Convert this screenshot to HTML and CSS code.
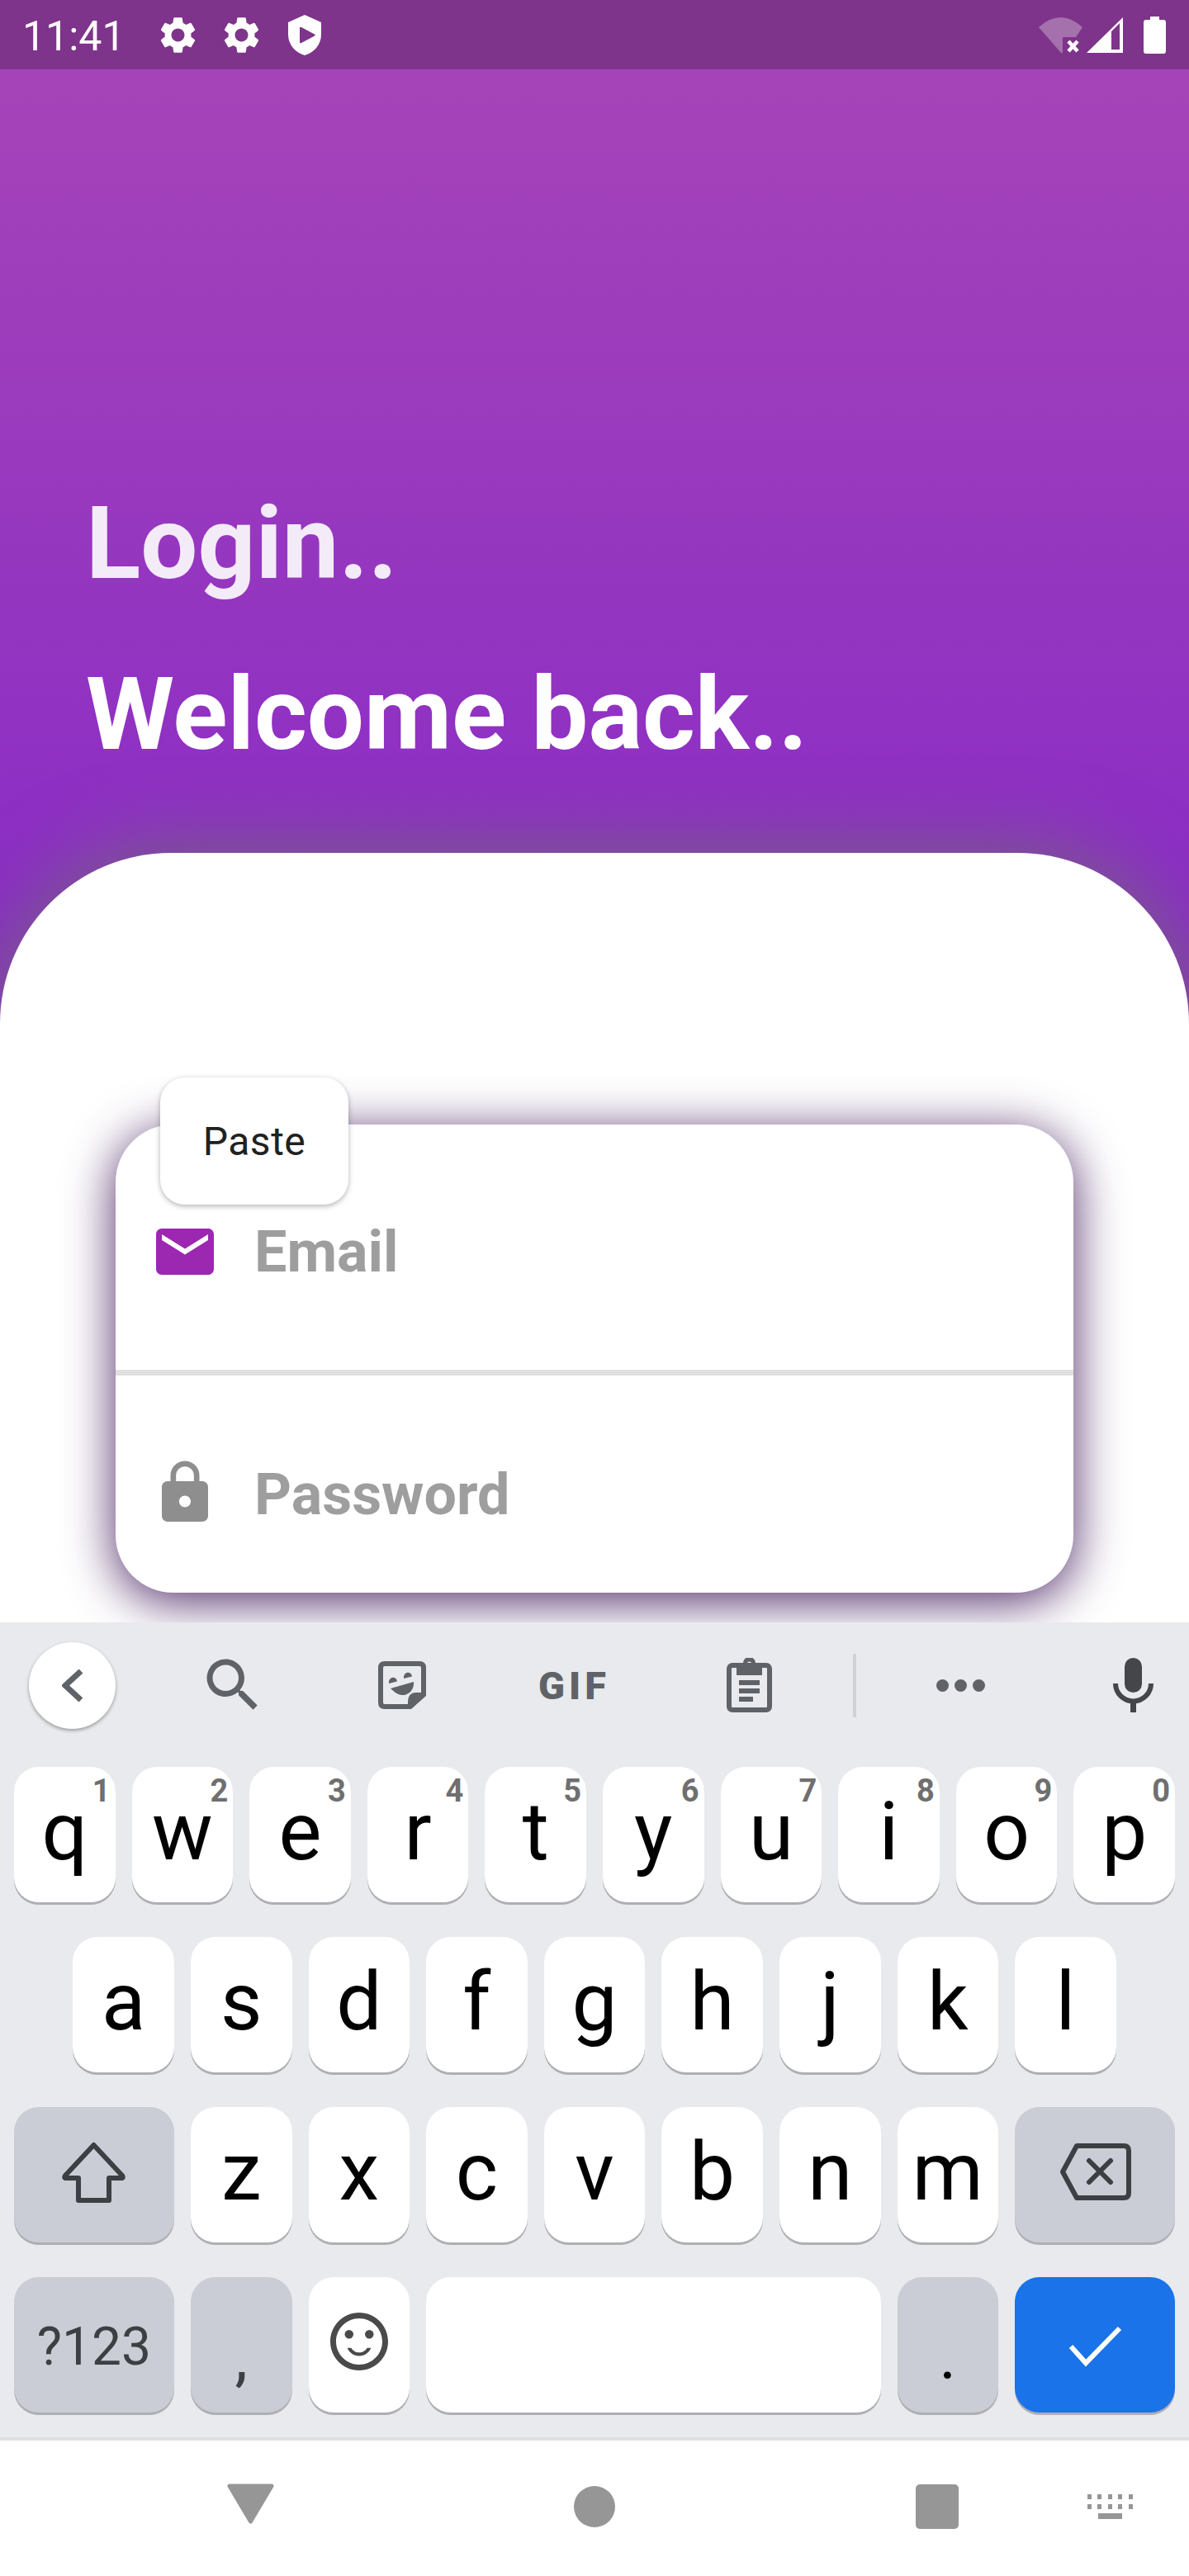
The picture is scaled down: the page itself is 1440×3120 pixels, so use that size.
FILE: index.html
```html
<html>
<head>
<title>Login</title>
<link rel="stylesheet" href="styles.css">
</head>
<body>

<div class="status">
  <span class="time">11:41</span>
  <svg class="st-gear" viewBox="0 0 24 24"><path fill="#fff" fill-rule="evenodd" d="M19.14 12.94c.04-.3.06-.61.06-.94 0-.32-.02-.64-.07-.94l2.03-1.58c.18-.14.23-.41.12-.61l-1.92-3.32c-.12-.22-.37-.29-.59-.22l-2.39.96c-.5-.38-1.03-.7-1.62-.94l-.36-2.54c-.04-.24-.24-.41-.48-.41h-3.84c-.24 0-.43.17-.47.41l-.36 2.54c-.59.24-1.13.57-1.62.94l-2.39-.96c-.22-.08-.47 0-.59.22L2.74 8.87c-.12.21-.08.47.12.61l2.03 1.58c-.05.3-.09.63-.09.94s.02.64.07.94l-2.03 1.58c-.18.14-.23.41-.12.61l1.92 3.32c.12.22.37.29.59.22l2.39-.96c.5.38 1.03.7 1.62.94l.36 2.54c.05.24.24.41.48.41h3.84c.24 0 .44-.17.47-.41l.36-2.54c.59-.24 1.13-.56 1.62-.94l2.39.96c.22.08.47 0 .59-.22l1.92-3.32c.12-.22.07-.47-.12-.61l-2.01-1.58zM12 15.6c-1.98 0-3.6-1.62-3.6-3.6s1.62-3.6 3.6-3.6 3.6 1.62 3.6 3.6-1.62 3.6-3.6 3.6z"/></svg>
  <svg class="st-gear two" viewBox="0 0 24 24"><path fill="#fff" fill-rule="evenodd" d="M19.14 12.94c.04-.3.06-.61.06-.94 0-.32-.02-.64-.07-.94l2.03-1.58c.18-.14.23-.41.12-.61l-1.92-3.32c-.12-.22-.37-.29-.59-.22l-2.39.96c-.5-.38-1.03-.7-1.62-.94l-.36-2.54c-.04-.24-.24-.41-.48-.41h-3.84c-.24 0-.43.17-.47.41l-.36 2.54c-.59.24-1.13.57-1.62.94l-2.39-.96c-.22-.08-.47 0-.59.22L2.74 8.87c-.12.21-.08.47.12.61l2.03 1.58c-.05.3-.09.63-.09.94s.02.64.07.94l-2.03 1.58c-.18.14-.23.41-.12.61l1.92 3.32c.12.22.37.29.59.22l2.39-.96c.5.38 1.03.7 1.62.94l.36 2.54c.05.24.24.41.48.41h3.84c.24 0 .44-.17.47-.41l.36-2.54c.59-.24 1.13-.56 1.62-.94l2.39.96c.22.08.47 0 .59-.22l1.92-3.32c.12-.22.07-.47-.12-.61l-2.01-1.58zM12 15.6c-1.98 0-3.6-1.62-3.6-3.6s1.62-3.6 3.6-3.6 3.6 1.62 3.6 3.6-1.62 3.6-3.6 3.6z"/></svg>
  <svg class="st-shield" viewBox="0 0 40 49"><path fill="#fff" fill-rule="evenodd" d="M20 0L40 9V24C40 36 31 46 20 49C9 46 0 36 0 24V9ZM14 16V33Q14 35 16 34L32 25.5Q33.5 24.500 32 23.500L16 15Q14 14 14 16Z"/></svg>
  <span class="st-space"></span>
  <svg class="st-wifi" viewBox="0 0 53 43"><path fill="#fff" fill-opacity="0.3" d="M0 12Q26 -12 53 12L45 24H29V43H27Z"/><path fill="none" stroke="#fff" stroke-width="4.500" d="M36 29L47 41M47 29L36 41"/></svg>
  <svg class="st-signal" viewBox="0 0 44 43"><path fill="#fff" fill-rule="evenodd" d="M0 43L44 0V43ZM30 17V39H40V7Z"/></svg>
  <svg class="st-batt" viewBox="0 0 27 45"><path fill="#fff" d="M8 0H19V4H24Q27 4 27 7V42Q27 45 24 45H3Q0 45 0 42V7Q0 4 3 4H8Z"/></svg>
</div>

<div class="screen">
  <div class="hero">
    <h1 class="login-title">Login..</h1>
    <h1 class="welcome-title">Welcome back..</h1>
  </div>

  <div class="sheet">
    <div class="card">
      <div class="paste">Paste</div>
      <div class="field first">
        <svg class="field-icon" viewBox="0 0 24 24"><path fill="#9c27b0" d="M20 4H4c-1.100 0-1.990.9-1.990 2L2 18c0 1.100.9 2 2 2h16c1.100 0 2-.9 2-2V6c0-1.100-.9-2-2-2zm0 4l-8 5-8-5V6l8 5 8-5v2z"/></svg>
        <span class="hint">Email</span>
      </div>
      <div class="field second">
        <svg class="field-icon" viewBox="0 0 24 24"><path fill="#8e8e8e" d="M18 8h-1V6c0-2.760-2.240-5-5-5S7 3.240 7 6v2H6c-1.100 0-2 .9-2 2v10c0 1.100.9 2 2 2h12c1.100 0 2-.9 2-2V10c0-1.100-.9-2-2-2zm-6 9c-1.100 0-2-.9-2-2s.9-2 2-2 2 .9 2 2-.9 2-2 2zm3.100-9H8.900V6c0-1.710 1.390-3.100 3.100-3.100 1.710 0 3.100 1.390 3.100 3.100v2z"/></svg>
        <span class="hint pw">Password</span>
      </div>
    </div>
  </div>
</div>

<div class="keyboard">
  <div class="toolbar">
    <div class="tb-back">
      <svg width="26" height="41" viewBox="0 0 26 41"><path fill="none" stroke="#5f6368" stroke-width="7" d="M23 3L4 20.500L23 38"/></svg>
    </div>
    <svg class="tb-search" viewBox="0 0 24 24"><path fill="#5f6368" d="M15.500 14h-.79l-.28-.27C15.410 12.590 16 11.110 16 9.500 16 5.910 13.090 3 9.500 3S3 5.910 3 9.500 5.910 16 9.500 16c1.610 0 3.090-.59 4.230-1.570l.27.28v.79l5 4.990L20.490 19l-4.990-5zm-6 0C7.010 14 5 11.990 5 9.500S7.010 5 9.500 5 14 7.010 14 9.500 11.990 14 9.500 14z"/></svg>
    <svg class="tb-sticker" viewBox="0 0 58 58">
      <path fill="none" stroke="#5f6368" stroke-width="6" d="M8 3H50Q55 3 55 8V40L38 55H8Q3 55 3 50V8Q3 3 8 3Z"/>
      <path fill="#5f6368" d="M58 38H46Q36 38 36 50V58H40L58 42Z"/>
      <path fill="#5f6368" d="M13 26A5 5.500 0 0 1 23 24.500L13 27ZM31 20A5 5.500 0 0 1 41 18.500L31 21ZM15 33L43 25C44 35 36 42 28 41C23 40 19 37 15 33Z"/>
    </svg>
    <span class="tb-gif">GIF</span>
    <svg class="tb-clip" viewBox="0 0 55 66">
      <rect x="3" y="9" width="49" height="54" rx="4" fill="none" stroke="#5f6368" stroke-width="6"/>
      <path fill="#5f6368" fill-rule="evenodd" d="M12 6H20A7.500 7 0 0 1 35 6H43V21H12ZM27.500 4.500A3 3.500 0 1 0 27.500 11.500A3 3.500 0 1 0 27.500 4.500Z"/>
      <rect x="15" y="27" width="25" height="6" fill="#5f6368"/>
      <rect x="15" y="37" width="25" height="6" fill="#5f6368"/>
      <rect x="15" y="47" width="17" height="6" fill="#5f6368"/>
    </svg>
    <span class="tb-divider"></span>
    <span class="tb-dots"><i></i><i></i><i></i></span>
    <svg class="tb-mic" viewBox="0 0 49 66">
      <rect x="14" y="0" width="21" height="42" rx="10.500" fill="#444649"/>
      <path fill="none" stroke="#444649" stroke-width="6" d="M3 31A21.500 21.500 0 0 0 46 31"/>
      <rect x="21" y="52" width="7" height="14" fill="#444649"/>
    </svg>
  </div>

  <div class="key-row">
    <div class="key">q<sup>1</sup></div>
    <div class="key">w<sup>2</sup></div>
    <div class="key">e<sup>3</sup></div>
    <div class="key">r<sup>4</sup></div>
    <div class="key">t<sup>5</sup></div>
    <div class="key">y<sup>6</sup></div>
    <div class="key">u<sup>7</sup></div>
    <div class="key">i<sup>8</sup></div>
    <div class="key">o<sup>9</sup></div>
    <div class="key">p<sup>0</sup></div>
  </div>
  <div class="key-row">
    <div class="key offset">a</div>
    <div class="key">s</div>
    <div class="key">d</div>
    <div class="key">f</div>
    <div class="key">g</div>
    <div class="key">h</div>
    <div class="key">j</div>
    <div class="key">k</div>
    <div class="key">l</div>
  </div>
  <div class="key-row">
    <div class="key wide dark">
      <svg width="79" height="75" viewBox="0 0 79 75"><path fill="none" stroke="#3c4043" stroke-width="6" stroke-linejoin="round" d="M39.500 5L5 42Q3 45 6 45H21V72H58V45H73Q76 45 74 42Z"/></svg>
    </div>
    <div class="key">z</div>
    <div class="key">x</div>
    <div class="key">c</div>
    <div class="key">v</div>
    <div class="key">b</div>
    <div class="key">n</div>
    <div class="key">m</div>
    <div class="key wide dark">
      <svg width="87" height="69" viewBox="0 0 87 69">
        <path fill="none" stroke="#3c4043" stroke-width="6" stroke-linejoin="round" d="M21 3H78Q84 3 84 9V60Q84 66 78 66H21L4 34.500Z"/>
        <path fill="none" stroke="#3c4043" stroke-width="6" stroke-linecap="round" d="M36 21L62 47M62 21L36 47"/>
      </svg>
    </div>
  </div>
  <div class="key-row">
    <div class="key wide dark sym">?123</div>
    <div class="key dark punct">,</div>
    <div class="key">
      <svg width="84" height="84" viewBox="0 0 24 24"><path fill="#4a4a4a" d="M11.990 2C6.470 2 2 6.480 2 12s4.470 10 9.990 10C17.520 22 22 17.520 22 12S17.520 2 11.990 2zM12 20c-4.420 0-8-3.580-8-8s3.580-8 8-8 8 3.580 8 8-3.580 8-8 8z"/><circle cx="15.500" cy="9.500" r="1.500" fill="#4a4a4a"/><circle cx="8.500" cy="9.500" r="1.500" fill="#4a4a4a"/><path fill="#4a4a4a" d="M12 16c-1.480 0-2.750-.81-3.450-2H6.880c.8 2.050 2.790 3.500 5.120 3.500s4.320-1.450 5.120-3.500h-1.670c-.7 1.190-1.970 2-3.450 2z" transform="translate(2.400 3) scale(.8)"/></svg>
    </div>
    <div class="key space"></div>
    <div class="key dark punct dot">.</div>
    <div class="key wide enter">
      <svg class="enter-check" width="66" height="50" viewBox="0 0 66 50"><path fill="none" stroke="#fff" stroke-width="6" d="M4 25L22 45L63 3"/></svg>
    </div>
  </div>
</div>

<div class="navbar">
  <svg class="nav-back" viewBox="0 0 57 49"><path fill="#969696" stroke="#969696" stroke-width="5" stroke-linejoin="round" d="M3 3H54L28.500 46Z"/></svg>
  <span class="nav-home"></span>
  <span class="nav-recent"></span>
  <svg class="nav-kbd" viewBox="0 0 55 30">
    <path fill="#969696" d="M0 0h5v6H0zM12 0h5v6h-5zM25 0h5v6h-5zM37 0h5v6h-5zM50 0h5v6h-5zM0 12h5v6H0zM12 12h5v6h-5zM25 12h5v6h-5zM37 12h5v6h-5zM50 12h5v6h-5zM13 23h29v7H13z"/>
  </svg>
</div>

</body>
</html>
```

FILE: styles.css
```css
body {
  margin: 0;
  width: 1440px;
  height: 3120px;
  overflow: hidden;
  font-family: Roboto, "Liberation Sans", sans-serif;
  background: white;
}

/* status bar */
.status {
  height: 84px;
  background: #7e348a;
  display: flex;
  align-items: center;
  color: white;
}
.time { font-size: 50px; margin-left: 27px; padding-top: 4px; }
.st-gear { width: 53px; height: 53px; margin-left: 37px; }
.st-gear.two { margin-left: 24px; }
.st-shield { width: 40px; height: 49px; margin-left: 30px; }
.st-space { flex: 1; }
.st-wifi { width: 53px; height: 43px; }
.st-signal { width: 44px; height: 43px; margin-left: 5px; }
.st-batt { width: 27px; height: 45px; margin-left: 25px; margin-right: 28px; }

/* purple header and white sheet */
.screen {
  height: 1881px;
  background: linear-gradient(#a544b8 0, #8b2dc5 1000px);
}
.hero { height: 949px; padding-left: 104px; box-sizing: border-box; padding-top: 502px; }
.login-title, .welcome-title {
  margin: 0;
  font-size: 122.5px;
  line-height: 144px;
  font-weight: 700;
}
.login-title { color: #f4ebf8; margin-bottom: 63px; }
.welcome-title { color: white; }

.sheet {
  position: relative;
  height: 932px;
  padding-top: 329px;
  box-sizing: border-box;
  background: white;
  border-radius: 207px 207px 0 0;
  box-shadow: 0 0 100px #73667a;
}

.card {
  position: relative;
  margin: 0 140px;
  height: 567px;
  background: white;
  border-radius: 70px;
  box-shadow: 0 10px 60px #4f2a66;
}
.paste {
  position: absolute;
  left: 54px;
  top: -57px;
  width: 228px;
  height: 154px;
  background: white;
  border-radius: 30px;
  box-shadow: 0 2px 6px rgba(0,0,0,0.3);
  display: flex;
  align-items: center;
  justify-content: center;
  font-size: 48px;
  font-weight: 450;
  letter-spacing: 0.5px;
  color: #212121;
}
.field { display: flex; align-items: flex-start; padding-left: 42px; box-sizing: border-box; }
.field.first { height: 304px; padding-top: 112px; border-bottom: 7px solid #e0e0e0; }
.field.second { height: 263px; padding-top: 100px; }
.field-icon { width: 84px; height: 84px; }
.hint {
  margin-left: 42px;
  font-size: 70px;
  line-height: 84px;
  font-weight: 700;
  color: #9e9e9e;
}
.hint.pw { margin-top: 2px; }

/* keyboard */
.keyboard {
  position: relative;
  height: 987px;
  background: #e8eaed;
}
.toolbar {
  height: 152px;
  margin-bottom: 23px;
  display: flex;
  align-items: center;
}
.tb-back {
  width: 105px;
  height: 105px;
  margin-left: 35px;
  border-radius: 50%;
  background: white;
  box-shadow: 0 2px 4px rgba(0,0,0,0.35);
  display: flex;
  align-items: center;
  justify-content: center;
}
.tb-search { width: 84px; height: 84px; margin-left: 100px; }
.tb-sticker { width: 58px; height: 58px; margin-left: 134px; }
.tb-gif {
  margin-left: 136px;
  font-size: 47px;
  font-weight: 900;
  letter-spacing: 5px;
  color: #5f6368;
}
.tb-clip { width: 55px; height: 66px; margin-left: 141px; }
.tb-divider { width: 4px; height: 77px; margin-left: 98px; background: #cfd1d6; }
.tb-dots { display: flex; gap: 7px; margin-left: 97px; }
.tb-dots i { width: 15px; height: 15px; border-radius: 50%; background: #5f6368; }
.tb-mic { width: 49px; height: 66px; margin-left: 155px; }

.key-row {
  display: grid;
  grid-template-columns: repeat(20, 1fr);
  padding: 0 7px;
  margin-bottom: 42px;
}
.key {
  position: relative;
  grid-column: span 2;
  margin: 0 10px;
  height: 164px;
  padding-bottom: 8px;
  box-sizing: border-box;
  background: white;
  border-radius: 30px;
  box-shadow: 0 3px 0 #aeafb3;
  display: flex;
  align-items: center;
  justify-content: center;
  font-size: 98px;
  color: black;
}
.key sup {
  position: absolute;
  top: 10px;
  right: 6px;
  font-size: 38px;
  line-height: 38px;
  font-weight: 700;
  color: #6f6f6f;
}
.key.offset { grid-column: 2 / span 2; }
.key.wide { grid-column: span 3; }
.key.space { grid-column: span 8; }
.key.dark { background: #cacdd5; }
.key.enter { background: #1a73e8; }
.enter-check { margin-top: 12px; }
.key.sym { font-size: 64px; color: #3c4043; padding-bottom: 0; padding-top: 4px; }
.key.punct { font-size: 78px; align-items: flex-end; padding-bottom: 22px; color: #3c4043; }
.key.dot { color: black; }

/* navigation bar */
.navbar {
  position: relative;
  height: 168px;
  box-sizing: border-box;
  border-top: 4px solid #e0e0e0;
  padding-bottom: 4px;
  background: white;
  display: flex;
  align-items: center;
}
.nav-back { width: 57px; height: 49px; margin-left: 275px; margin-bottom: 7px; }
.nav-home { width: 50px; height: 50px; margin-left: 363px; border-radius: 50%; background: #969696; }
.nav-recent { width: 52px; height: 54px; margin-left: 364px; border-radius: 5px; background: #969696; }
.nav-kbd { width: 55px; height: 30px; margin-left: 156px; }
```
